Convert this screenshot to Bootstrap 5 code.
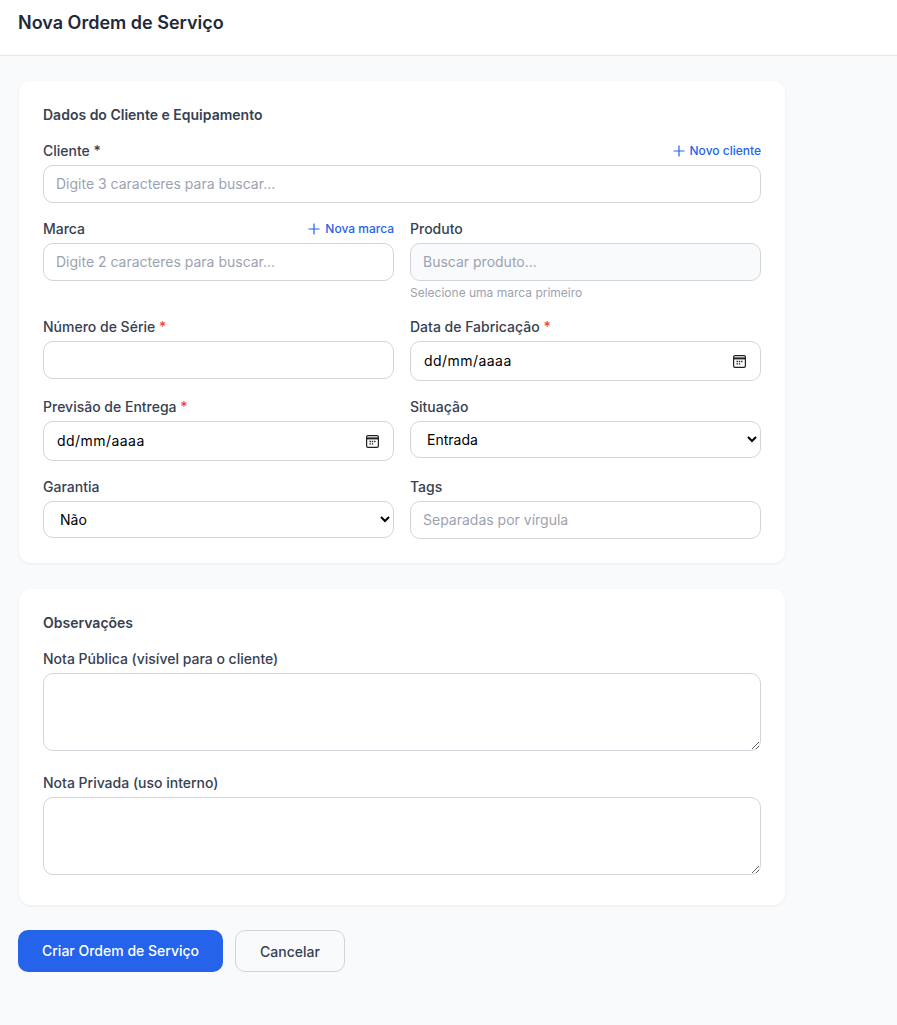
<!DOCTYPE html>
<html lang="pt-BR">
<head>
    <meta charset="UTF-8">
    <meta name="viewport" content="width=device-width, initial-scale=1.0">
    <title>Nova Ordem de Serviço</title>
    <link href="https://cdn.jsdelivr.net/npm/bootstrap@5.3.0/dist/css/bootstrap.min.css" rel="stylesheet">
    <style>
        body {
            background-color: #f9fafb;
            font-family: Inter, "Liberation Sans", sans-serif;
            font-size: 14px;
            color: #374151;
        }
        .topo {
            height: 56px;
            background: #fff;
            border-bottom: 1px solid #e5e7eb;
            padding: 10px 18px 0;
        }
        .topo h1 {
            font-size: 18px;
            line-height: 26px;
            font-weight: 600;
            color: #1f2937;
            margin: 0;
        }
        .conteudo {
            width: 785px;
            padding: 25px 0 53px 18px;
        }
        .bloco {
            background: #fff;
            border-radius: 12px;
            box-shadow: 0 1px 3px rgba(0, 0, 0, 0.06);
            padding: 24px;
            margin: 0 0 26px 1px;
        }
        .bloco + .bloco { margin-bottom: 25px; }
        .bloco h2 {
            font-size: 14px;
            line-height: 20px;
            font-weight: 600;
            color: #374151;
            margin-bottom: 16px;
        }
        .rotulo {
            display: block;
            font-size: 14px;
            line-height: 20px;
            font-weight: 500;
            color: #374151;
            margin-bottom: 4px;
        }
        .obrigatorio { color: #ef4444; }
        .novo-link {
            font-size: 12px;
            line-height: 20px;
            font-weight: 500;
            color: #2563eb;
            text-decoration: none;
        }
        .novo-link svg { margin-right: 5px; vertical-align: -2px; }
        .form-control.campo {
            height: 38px;
            font-size: 14px;
            padding: 0 12px 2px;
            border-color: #d1d5db;
            border-radius: 10px;
            color: #000;
        }
        .form-control.campo::placeholder { color: #9ca3af; opacity: 1; }
        .form-control.campo:disabled { background-color: #f9fafb; }
        .form-control.data-campo {
            height: 40px;
            letter-spacing: 0.45px;
            padding-left: 13px;
        }
        .form-select.lista {
            height: 37px;
            font-size: 14px;
            padding: 0 8px 0 12px;
            border-color: #d1d5db;
            border-radius: 10px;
            color: #000;
            appearance: auto;
            -webkit-appearance: auto;
            background-image: none;
        }
        .icone-data {
            position: absolute;
            right: 15px;
            top: 14px;
        }
        .ajuda {
            font-size: 12px;
            line-height: 16px;
            color: #9ca3af;
            margin-top: 4px;
        }
        textarea.form-control.nota {
            height: 78px;
            font-size: 14px;
            border-color: #d1d5db;
            border-radius: 10px;
        }
        .nota-grupo { margin-bottom: 22px; }
        .nota-grupo:last-child { margin-bottom: 6px; }
        .btn.criar {
            height: 42px;
            padding: 0 24px 1px;
            font-size: 14px;
            font-weight: 500;
            color: #fff;
            background: #2563eb;
            border: 0;
            border-radius: 10px;
        }
        .btn.cancelar {
            height: 42px;
            padding: 0 24px;
            font-size: 14px;
            font-weight: 500;
            color: #374151;
            background: #f9fafb;
            border: 1px solid #d1d5db;
            border-radius: 10px;
        }
    </style>
</head>
<body>

<header class="topo">
    <h1>Nova Ordem de Serviço</h1>
</header>

<main class="conteudo">
    <section class="bloco">
        <h2>Dados do Cliente e Equipamento</h2>

        <div class="mb-3">
            <div class="d-flex justify-content-between align-items-center">
                <label class="rotulo">Cliente *</label>
                <a href="#" class="novo-link mb-1">
                    <svg width="12" height="12" viewBox="0 0 12 12" fill="none" stroke="#2563eb" stroke-width="1.2"><path d="M6 .5v11M.5 6h11"/></svg>Novo cliente
                </a>
            </div>
            <input type="text" class="form-control campo" placeholder="Digite 3 caracteres para buscar...">
        </div>

        <div class="row gx-3">
            <div class="col-6 pb-3">
                <div class="d-flex justify-content-between align-items-center">
                    <label class="rotulo">Marca</label>
                    <a href="#" class="novo-link mb-1">
                        <svg width="12" height="12" viewBox="0 0 12 12" fill="none" stroke="#2563eb" stroke-width="1.2"><path d="M6 .5v11M.5 6h11"/></svg>Nova marca
                    </a>
                </div>
                <input type="text" class="form-control campo" placeholder="Digite 2 caracteres para buscar...">
            </div>
            <div class="col-6 pb-3">
                <label class="rotulo">Produto</label>
                <input type="text" class="form-control campo" placeholder="Buscar produto..." disabled>
                <div class="ajuda">Selecione uma marca primeiro</div>
            </div>

            <div class="col-6 pb-3">
                <label class="rotulo">Número de Série <span class="obrigatorio">*</span></label>
                <input type="text" class="form-control campo">
            </div>
            <div class="col-6 pb-3">
                <label class="rotulo">Data de Fabricação <span class="obrigatorio">*</span></label>
                <div class="position-relative">
                    <input type="text" class="form-control campo data-campo" value="dd/mm/aaaa">
                    <svg class="icone-data" width="13" height="13" viewBox="0 0 13 13" fill="none"><rect x=".6" y=".6" width="11.8" height="11.8" rx="1.4" stroke="#222" stroke-width="1.2"/><path d="M1 3.4h11" stroke="#222" stroke-width="2"/><path d="M3.5 6.5h1.4M5.8 6.5h1.4M8.1 6.5h1.4M3.5 8.9h1.4M5.8 8.9h1.4" stroke="#222" stroke-width="1.3"/></svg>
                </div>
            </div>

            <div class="col-6 pb-3">
                <label class="rotulo">Previsão de Entrega <span class="obrigatorio">*</span></label>
                <div class="position-relative">
                    <input type="text" class="form-control campo data-campo" value="dd/mm/aaaa">
                    <svg class="icone-data" width="13" height="13" viewBox="0 0 13 13" fill="none"><rect x=".6" y=".6" width="11.8" height="11.8" rx="1.4" stroke="#222" stroke-width="1.2"/><path d="M1 3.4h11" stroke="#222" stroke-width="2"/><path d="M3.5 6.5h1.4M5.8 6.5h1.4M8.1 6.5h1.4M3.5 8.9h1.4M5.8 8.9h1.4" stroke="#222" stroke-width="1.3"/></svg>
                </div>
            </div>
            <div class="col-6 pb-3">
                <label class="rotulo">Situação</label>
                <select class="form-select lista"><option>Entrada</option></select>
            </div>

            <div class="col-6">
                <label class="rotulo">Garantia</label>
                <select class="form-select lista"><option>Não</option></select>
            </div>
            <div class="col-6">
                <label class="rotulo">Tags</label>
                <input type="text" class="form-control campo" placeholder="Separadas por vírgula">
            </div>
        </div>
    </section>

    <section class="bloco">
        <h2>Observações</h2>
        <div class="nota-grupo">
            <label class="rotulo">Nota Pública (visível para o cliente)</label>
            <textarea class="form-control nota"></textarea>
        </div>
        <div class="nota-grupo">
            <label class="rotulo">Nota Privada (uso interno)</label>
            <textarea class="form-control nota"></textarea>
        </div>
    </section>

    <div class="d-flex gap-2">
        <button type="button" class="btn criar">Criar Ordem de Serviço</button>
        <button type="button" class="btn cancelar ms-1">Cancelar</button>
    </div>
</main>

<script src="https://cdn.jsdelivr.net/npm/bootstrap@5.3.0/dist/js/bootstrap.bundle.min.js"></script>
</body>
</html>
